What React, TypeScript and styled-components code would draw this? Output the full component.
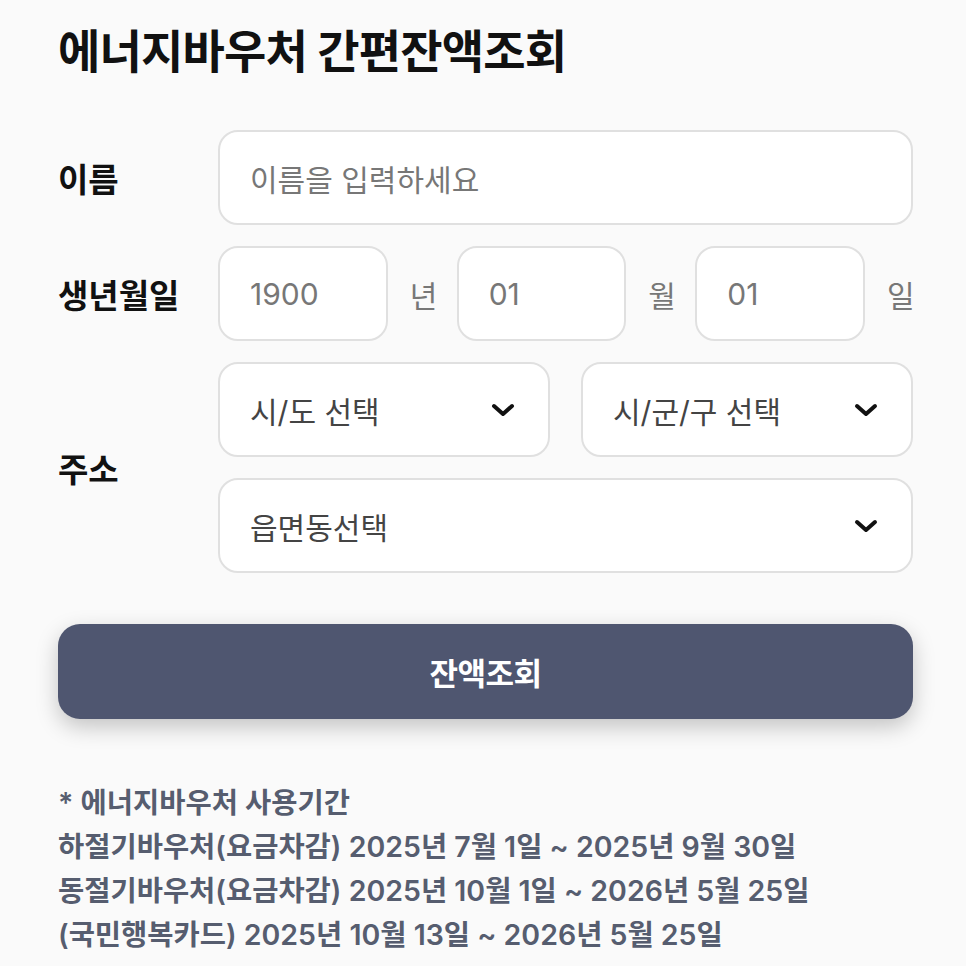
import React from "react";
import styled, { createGlobalStyle } from "styled-components";

const GlobalStyle = createGlobalStyle`
  html, body {
    margin: 0;
    padding: 0;
    background: #fafafa;
  }
  body {
    font-family: "Inter", "Noto Sans CJK KR", sans-serif;
  }
`;

const StyledPage = styled.div`
  width: 966px;
  box-sizing: border-box;
  padding: 21px 53px 0 58px;
  background: #fafafa;
`;

const StyledTitle = styled.h1`
  margin: 0;
  font-size: 46px;
  line-height: 60px;
  font-weight: 700;
  letter-spacing: -0.8px;
  color: #111;
`;

const StyledForm = styled.div`
  margin-top: 49px;
  display: grid;
  grid-template-columns: 160px 1fr;
  row-gap: 21px;
`;

const StyledLabel = styled.div`
  align-self: center;
  font-size: 33px;
  font-weight: 700;
  color: #111;
`;

const StyledField = styled.div<{ $muted?: boolean }>`
  height: 95px;
  box-sizing: border-box;
  border: 2px solid #e0e0e0;
  border-radius: 20px;
  background: #fff;
  display: flex;
  align-items: center;
  justify-content: space-between;
  padding: 0 33px 0 30px;
  font-size: 30px;
  color: ${(p) => (p.$muted ? "#777" : "#444")};
  min-width: 0;
`;

const StyledDateRow = styled.div`
  display: flex;
  align-items: center;

  & > ${StyledField} {
    flex: 1;
  }
`;

const StyledUnit = styled.span`
  font-size: 30px;
  color: #777;
  width: 26px;
  margin: 0 21px 0 22px;
  text-align: center;

  &:last-child {
    margin-right: 0;
  }
`;

const StyledAddress = styled.div`
  display: flex;
  flex-direction: column;
  gap: 21px;
`;

const StyledSelectRow = styled.div`
  display: flex;
  gap: 31px;

  & > ${StyledField} {
    flex: 1;
  }
`;

const StyledButton = styled.button`
  margin-top: 51px;
  width: 100%;
  height: 95px;
  border: none;
  border-radius: 22px;
  background: #4f5670;
  color: #fff;
  font-family: inherit;
  font-size: 31px;
  font-weight: 700;
  letter-spacing: -0.5px;
  box-shadow: 0 8px 22px rgba(0, 0, 0, 0.22);
`;

const StyledNotes = styled.div`
  margin-top: 62px;
  font-size: 28.5px;
  line-height: 44px;
  font-weight: 600;
  color: #565d6f;
`;

const Chevron = () => (
  <svg width="24" height="14" viewBox="0 0 24 14">
    <polyline
      points="3,3 12,11 21,3"
      fill="none"
      stroke="#111"
      strokeWidth="4"
      strokeLinecap="round"
      strokeLinejoin="round"
    />
  </svg>
);

const Select = ({ label }: { label: string }) => (
  <StyledField>
    <span>{label}</span>
    <Chevron />
  </StyledField>
);

const App = () => {
  return (
    <StyledPage>
      <GlobalStyle />
      <StyledTitle>에너지바우처 간편잔액조회</StyledTitle>
      <StyledForm>
        <StyledLabel>이름</StyledLabel>
        <StyledField $muted>이름을 입력하세요</StyledField>

        <StyledLabel>생년월일</StyledLabel>
        <StyledDateRow>
          <StyledField $muted>1900</StyledField>
          <StyledUnit>년</StyledUnit>
          <StyledField $muted>01</StyledField>
          <StyledUnit>월</StyledUnit>
          <StyledField $muted>01</StyledField>
          <StyledUnit>일</StyledUnit>
        </StyledDateRow>

        <StyledLabel>주소</StyledLabel>
        <StyledAddress>
          <StyledSelectRow>
            <Select label="시/도 선택" />
            <Select label="시/군/구 선택" />
          </StyledSelectRow>
          <Select label="읍면동선택" />
        </StyledAddress>
      </StyledForm>

      <StyledButton>잔액조회</StyledButton>

      <StyledNotes>
        <div>* 에너지바우처 사용기간</div>
        <div>하절기바우처(요금차감) 2025년 7월 1일 ~ 2025년 9월 30일</div>
        <div>동절기바우처(요금차감) 2025년 10월 1일 ~ 2026년 5월 25일</div>
        <div>(국민행복카드) 2025년 10월 13일 ~ 2026년 5월 25일</div>
      </StyledNotes>
    </StyledPage>
  );
};

export default App;
